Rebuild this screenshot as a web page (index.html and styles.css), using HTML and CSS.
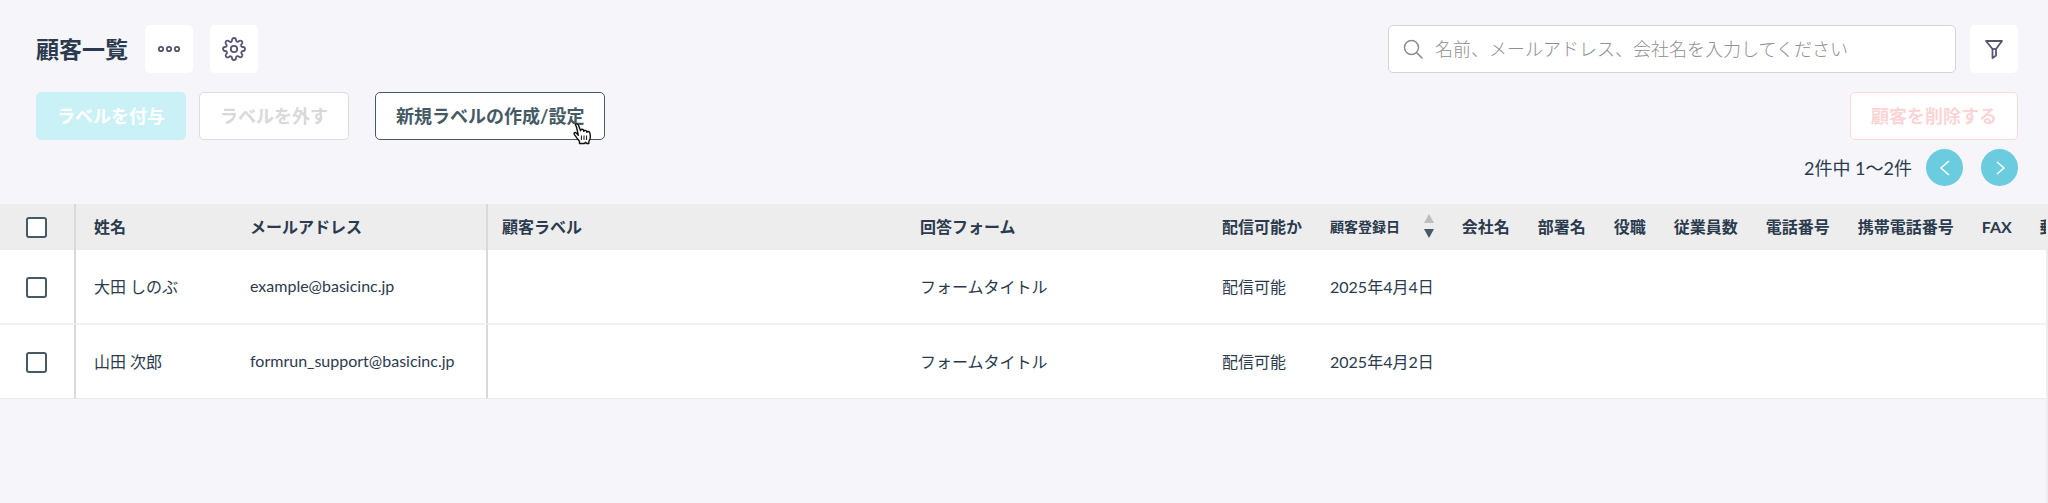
FILE: index.html
```
<!DOCTYPE html>
<html lang="ja">
<head>
  <meta charset="UTF-8">
  <meta name="viewport" content="width=device-width, initial-scale=1.0">
  <title>顧客一覧</title>
  <link rel="stylesheet" href="styles.css">
</head>
<body>
  <header class="page-header">
    <div class="header-row">
      <h1>顧客一覧</h1>
      <button type="button" class="icon-button" aria-label="メニュー">
        <svg width="24" height="24" viewBox="0 0 24 24" fill="none" stroke="currentColor" stroke-width="1.8">
          <circle cx="4" cy="12" r="2.2"/>
          <circle cx="12" cy="12" r="2.2"/>
          <circle cx="20" cy="12" r="2.2"/>
        </svg>
      </button>
      <button type="button" class="icon-button" aria-label="設定">
        <svg width="24" height="24" viewBox="0 0 24 24" fill="none" stroke="currentColor" stroke-width="1.8" stroke-linejoin="round">
          <circle cx="12" cy="12" r="3.2"/>
          <path d="M19.4 15a1.65 1.65 0 0 0 .33 1.82l.06.06a2 2 0 1 1-2.83 2.83l-.06-.06a1.65 1.65 0 0 0-2.9 1.09V21a2 2 0 0 1-4 0v-.09a1.65 1.65 0 0 0-2.9-1.09l-.06.06a2 2 0 1 1-2.83-2.83l.06-.06A1.65 1.65 0 0 0 3.09 14H3a2 2 0 0 1 0-4h.09a1.65 1.65 0 0 0 1.09-2.9l-.06-.06a2 2 0 1 1 2.83-2.83l.06.06A1.65 1.65 0 0 0 10 3.09V3a2 2 0 0 1 4 0v.09a1.65 1.65 0 0 0 2.9 1.09l.06-.06a2 2 0 1 1 2.83 2.83l-.06.06A1.65 1.65 0 0 0 20.91 10H21a2 2 0 0 1 0 4h-.09a1.65 1.65 0 0 0-1.51 1z"/>
        </svg>
      </button>
      <form class="search" role="search">
        <label class="search-box">
          <svg width="20" height="20" viewBox="0 0 20 20" fill="none" stroke="currentColor" stroke-width="1.5" stroke-linecap="round">
            <circle cx="8.5" cy="8.5" r="7"/>
            <path d="M13.6 13.6 19 19"/>
          </svg>
          <input type="search" aria-label="顧客を検索" placeholder="名前、メールアドレス、会社名を入力してください">
        </label>
        <button type="button" class="icon-button" aria-label="絞り込み">
          <svg width="20" height="20" viewBox="0 0 20 20" fill="none" stroke="currentColor" stroke-width="1.8" stroke-linejoin="round">
            <path d="M2 2h16l-6 8v6.5L8.5 19v-9z"/>
            <path d="M8.5 10H12"/>
          </svg>
        </button>
      </form>
    </div>
    <div class="action-row">
      <button type="button" class="button button-primary" disabled>ラベルを付与</button>
      <button type="button" class="button" disabled>ラベルを外す</button>
      <button type="button" class="button button-outline">新規ラベルの作成/設定
        <svg class="pointer" width="20" height="22" viewBox="0 0 20 22" fill="#fff" stroke="#111" stroke-width="1.4" stroke-linejoin="round">
          <path d="M6.5 20.5v-2.2L4 15.2 1.3 11.4c-1-1.6.9-2.6 2-1.3l2 2.1L3.6 4.5C3.2 2.7 1.5 1.2 3.6.9c1.4-.2 1.9 1.2 2.4 2.6l1.6 4.3c0-1.9 2.8-2 3-.2l.2.8c.2-1.5 2.5-1.4 2.9.1l.2.9c.4-1.3 2.5-1.1 2.9.5.6 2.3.8 3.7.3 5.6l-1.3 3.2v1.8h-2.2l-1-1.2-1.2 1.2z"/>
          <path d="M8.4 12.5v4.5M11 12.5v4.5M13.6 12.5v4.5" stroke-width="1"/>
        </svg>
      </button>
      <button type="button" class="button button-danger" disabled>顧客を削除する</button>
    </div>
    <nav class="pager" aria-label="ページ送り">
      <span>2件中 1〜2件</span>
      <button type="button" class="pager-button" aria-label="前へ">
        <svg width="18" height="18" viewBox="0 0 18 18" fill="none" stroke="currentColor" stroke-width="1.5"><path d="M13 2 5 9l8 7"/></svg>
      </button>
      <button type="button" class="pager-button" aria-label="次へ">
        <svg width="18" height="18" viewBox="0 0 18 18" fill="none" stroke="currentColor" stroke-width="1.5"><path d="M6 3l7 6-7 6"/></svg>
      </button>
    </nav>
  </header>

  <main class="table-wrap">
    <table>
      <!-- 各列の幅 -->
      <colgroup>
        <col class="col-check">
        <col class="col-name">
        <col class="col-mail">
        <col class="col-label">
        <col class="col-form">
        <col class="col-status">
        <col class="col-date">
      </colgroup>
      <thead>
        <tr>
          <th class="check"><input type="checkbox" aria-label="すべて選択"></th>
          <th class="name">姓名</th>
          <th class="mail">メールアドレス</th>
          <th>顧客ラベル</th>
          <th>回答フォーム</th>
          <th>配信可能か</th>
          <th>
            <button type="button" class="sort">顧客登録日
              <svg width="10" height="24" viewBox="0 0 10 24">
                <path class="sort-up" d="M0 9 5 0l5 9z"/>
                <path class="sort-down" d="M0 15h10l-5 9z"/>
              </svg>
            </button>
          </th>
          <th>会社名</th>
          <th>部署名</th>
          <th>役職</th>
          <th>従業員数</th>
          <th>電話番号</th>
          <th>携帯電話番号</th>
          <th>FAX</th>
          <th>郵便番号</th>
        </tr>
      </thead>
      <tbody>
        <tr>
          <td class="check"><input type="checkbox" aria-label="大田 しのぶを選択"></td>
          <td class="name">大田 しのぶ</td>
          <td class="mail">example@basicinc.jp</td>
          <td></td>
          <td>フォームタイトル</td>
          <td>配信可能</td>
          <td>2025年4月4日</td>
          <td></td><td></td><td></td><td></td><td></td><td></td><td></td><td></td>
        </tr>
        <tr>
          <td class="check"><input type="checkbox" aria-label="山田 次郎を選択"></td>
          <td class="name">山田 次郎</td>
          <td class="mail">formrun_support@basicinc.jp</td>
          <td></td>
          <td>フォームタイトル</td>
          <td>配信可能</td>
          <td>2025年4月2日</td>
          <td></td><td></td><td></td><td></td><td></td><td></td><td></td><td></td>
        </tr>
      </tbody>
    </table>
  </main>
</body>
</html>
```
FILE: styles.css
```
* { margin: 0; padding: 0; box-sizing: border-box; }
body {
  font-family: Lato, "Noto Sans CJK JP", sans-serif;
  font-size: 16px;
  color: #2b3a4d;
  background: #f5f5fa;
  min-height: 100vh;
  display: flex;
  flex-direction: column;
}
button, input { font-family: inherit; }
button { cursor: pointer; }
svg { display: block; flex: none; }

/* ヘッダー */
.page-header {
  padding: 25px 30px 18px 36px;
}
.header-row {
  display: flex;
  align-items: center;
  gap: 17px;
}
h1 {
  font-size: 23px;
  font-weight: 700;
  line-height: 32px;
}
.icon-button {
  width: 48px;
  height: 48px;
  flex: none;
  display: flex;
  align-items: center;
  justify-content: center;
  background: #fff;
  border: none;
  border-radius: 5px;
  color: #5a5470;
}
.search {
  margin-left: auto;
  display: flex;
  gap: 14px;
}
.search-box {
  width: 568px;
  height: 48px;
  display: flex;
  align-items: center;
  gap: 12px;
  padding: 0 14px;
  background: #fff;
  border: 1px solid #d4d4d4;
  border-radius: 5px;
  color: #8c8c8c;
}
.search-box input {
  flex: 1;
  border: none;
  outline: none;
  background: none;
  font-size: 18px;
  font-weight: 300;
}
.search-box input::placeholder { color: #8f8f8f; }

/* 操作ボタン */
.action-row {
  display: flex;
  gap: 13px;
  margin-top: 19px;
}
.button {
  position: relative;
  height: 48px;
  padding: 0 20px 2px;
  background: #fff;
  border: 1px solid #dcdcdc;
  border-radius: 5px;
  color: #d9d9d9;
  font-size: 18px;
  font-weight: 700;
  white-space: nowrap;
}
.button-primary {
  background: #caf1f6;
  border-color: #caf1f6;
  color: #fff;
}
.button-outline {
  margin-left: 13px;
  border-color: #455a64;
  color: #455a64;
}
.button-danger {
  margin-left: auto;
  border-color: #fbd9d9;
  color: #fbd5d5;
}
.pointer {
  position: absolute;
  right: 11px;
  bottom: -6px;
}

/* ページ送り */
.pager {
  display: flex;
  align-items: center;
  justify-content: flex-end;
  gap: 18px;
  margin-top: 9px;
  font-size: 18px;
}
.pager span {
  margin-right: -4px;
  padding-bottom: 2px;
}
.pager-button {
  width: 37px;
  height: 37px;
  display: flex;
  align-items: center;
  justify-content: center;
  background: #6bcbdf;
  border: none;
  border-radius: 50%;
  color: #fff;
}

/* 顧客テーブル */
.table-wrap {
  flex: 1;
  overflow: hidden;
  border-right: 2px solid #ededed;
}
table {
  width: max-content;
  border-collapse: separate;
  border-spacing: 0;
  background: #fff;
  white-space: nowrap;
}
th, td {
  padding: 0 14px 2px;
  text-align: left;
}
th {
  height: 46px;
  background: #ededed;
  font-weight: 700;
}
td {
  height: 75px;
  border-bottom: 2px solid #f2f2f2;
}
tr:last-child td {
  height: 74px;
  border-bottom: 1px solid #ebebeb;
}
.col-check { width: 76px; }
.col-name { width: 160px; }
.col-mail { width: 252px; }
.col-label { width: 418px; }
.col-form { width: 302px; }
.col-status { width: 108px; }
.col-date { width: 130px; }
.check {
  padding: 0 0 0 26px;
  border-right: 2px solid #d9d9d9;
}
td.check { padding-top: 2px; }
.name { padding-left: 18px; }
.mail { border-right: 2px solid #d9d9d9; }
input[type="checkbox"] {
  appearance: none;
  display: block;
  width: 21px;
  height: 21px;
  background: #fff;
  border: 2px solid #455a64;
  border-radius: 3px;
}
input[type="checkbox"]:checked { background: #455a64; }
.sort {
  width: 100%;
  display: flex;
  align-items: center;
  justify-content: space-between;
  background: none;
  border: none;
  color: inherit;
  font-size: 14px;
  font-weight: 700;
}
.sort-up { fill: #bdbdbd; }
.sort-down { fill: #455a64; }
```
